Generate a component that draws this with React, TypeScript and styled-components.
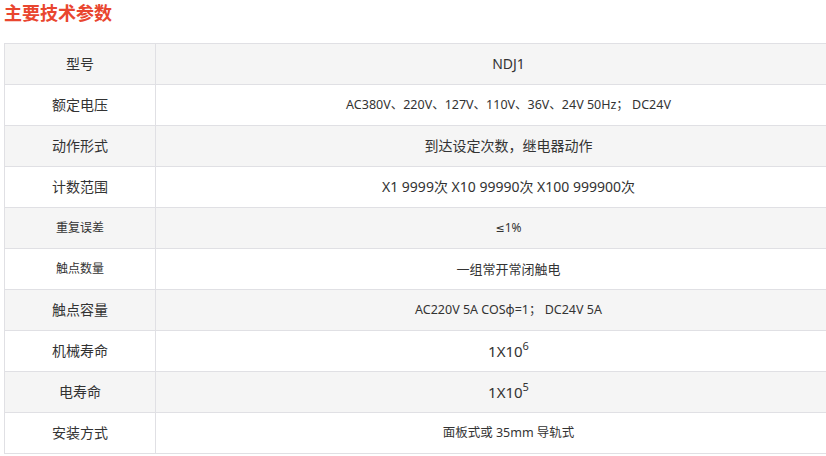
import styled, { createGlobalStyle } from "styled-components";

const GlobalStyle = createGlobalStyle`
  html, body {
    margin: 0;
    padding: 0;
    background: #ffffff;
    overflow: hidden;
  }
  body {
    font-family: "Noto Sans", "Noto Sans CJK SC", sans-serif;
    color: #333333;
  }
`;

const Page = styled.div`
  padding: 0 4px;
  width: 860px;
`;

const Title = styled.h2`
  margin: 0 0 19px 0;
  height: 24px;
  line-height: 24px;
  font-family: "Noto Sans CJK SC", sans-serif;
  font-size: 18px;
  font-weight: 700;
  color: #e9462f;
`;

const ParamTable = styled.table`
  width: 858px;
  border-collapse: collapse;
  table-layout: fixed;
`;

const ParamRow = styled.tr<{ $shaded: boolean }>`
  background: ${(p) => (p.$shaded ? "#f5f5f5" : "#ffffff")};
`;

const Cell = styled.td<{ $size: number }>`
  height: 40px;
  padding: 0;
  border: 1px solid #e0e0e4;
  text-align: center;
  vertical-align: middle;
  font-size: ${(p) => p.$size}px;
  line-height: 20px;

  sup {
    font-size: 11px;
    line-height: 0;
    vertical-align: 7px;
  }
`;

const LabelCell = styled(Cell)`
  width: 150px;
`;

const ValueCell = styled(Cell)``;

const Sym = styled.span`
  font-family: "DejaVu Sans", sans-serif;
  font-size: 11px;
`;

type Row = {
  label: string;
  labelSize?: number;
  value: React.ReactNode;
  valueSize?: number;
};

const rows: Row[] = [
  { label: "型号", value: "NDJ1", valueSize: 14 },
  {
    label: "额定电压",
    value: "AC380V、220V、127V、110V、36V、24V 50Hz； DC24V",
    valueSize: 12.5,
  },
  { label: "动作形式", value: "到达设定次数，继电器动作", valueSize: 14 },
  {
    label: "计数范围",
    value: "X1 9999次 X10 99990次 X100 999900次",
    valueSize: 14,
  },
  {
    label: "重复误差",
    labelSize: 12,
    value: (
      <>
        <Sym>≤</Sym>1%
      </>
    ),
    valueSize: 12,
  },
  { label: "触点数量", labelSize: 12, value: "一组常开常闭触电", valueSize: 13 },
  { label: "触点容量", value: "AC220V 5A COSφ=1； DC24V 5A", valueSize: 12.5 },
  {
    label: "机械寿命",
    value: (
      <>
        1X10<sup>6</sup>
      </>
    ),
    valueSize: 15,
  },
  {
    label: "电寿命",
    value: (
      <>
        1X10<sup>5</sup>
      </>
    ),
    valueSize: 15,
  },
  { label: "安装方式", value: "面板式或 35mm 导轨式", valueSize: 12.5 },
];

export default function App() {
  return (
    <>
      <GlobalStyle />
      <Page>
        <Title>主要技术参数</Title>
        <ParamTable>
          <tbody>
            {rows.map((r, i) => (
              <ParamRow key={r.label} $shaded={i % 2 === 0}>
                <LabelCell $size={r.labelSize ?? 14}>{r.label}</LabelCell>
                <ValueCell $size={r.valueSize ?? 14}>{r.value}</ValueCell>
              </ParamRow>
            ))}
          </tbody>
        </ParamTable>
      </Page>
    </>
  );
}
